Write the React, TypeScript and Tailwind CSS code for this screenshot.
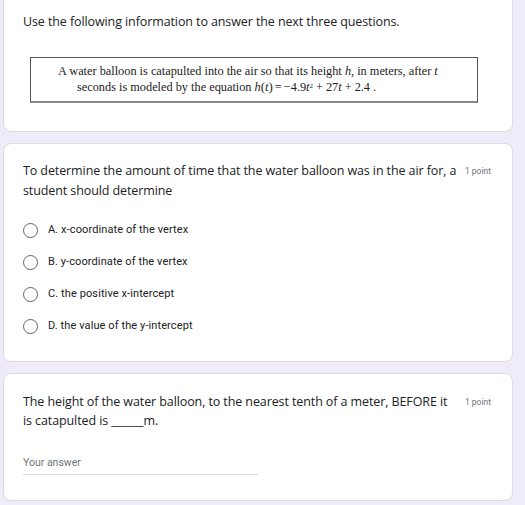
import React from 'react';

const options = [
  'A. x-coordinate of the vertex',
  'B. y-coordinate of the vertex',
  'C. the positive x-intercept',
  'D. the value of the y-intercept',
];

const Radio: React.FC = () => (
  <span className="block w-[15px] h-[15px] rounded-full border-[1.5px] border-[#5f6368] shrink-0" />
);

const Point: React.FC = () => (
  <span className="shrink-0 text-[8.5px] text-[#70757a] pt-[4px] ml-[6px]">1 point</span>
);

const App: React.FC = () => {
  return (
    <div className="w-[525px] h-[505px] bg-[#f0ebf8] overflow-hidden font-['Roboto',sans-serif] text-[#202124]">
      <div className="ml-[3px] w-[510px] flex flex-col gap-[11px]">
        {/* info card (top edge is scrolled off) */}
        <div className="bg-white rounded-b-lg border border-t-0 border-[#dadce0] h-[132px] pt-[13px] pl-[19px]">
          <p className="text-[12.5px] leading-[18px] font-['Open_Sans',sans-serif] tracking-[-0.1px]">
            Use the following information to answer the next three questions.
          </p>
          <div className="mt-[26px] ml-[7px] w-[448px] h-[46px] border border-[#555] border-b-2 border-b-[#888] font-['Liberation_Serif',serif] text-[12.3px] leading-[15px] text-[#222] pt-[6px]">
            <div className="pl-[27px] whitespace-nowrap">
              A water balloon is catapulted into the air so that its height <i>h</i>, in meters, after <i>t</i>
            </div>
            <div className="pl-[46px] whitespace-nowrap">
              seconds is modeled by the equation <i>h</i>
              <span className="text-[13px]">(</span><i>t</i><span className="text-[13px]">)</span>
              <span className="mx-[2px]">=</span>−4.9<i>t</i><sup className="text-[7px]">2</sup>
              <span className="mx-[3px]">+</span>27<i>t</i>
              <span className="mx-[3px]">+</span>2.4 .
            </div>
          </div>
        </div>

        {/* multiple choice card */}
        <div className="bg-white rounded-lg border border-[#dadce0] h-[219px] pt-[17px] pl-[19px] pr-[21px]">
          <div className="flex items-start">
            <p className="flex-1 text-[12.5px] leading-[20px] font-['Open_Sans',sans-serif] tracking-[-0.1px]">
              To determine the amount of time that the water balloon was in the air for, a student should determine
            </p>
            <Point />
          </div>
          <div className="mt-[22px] flex flex-col gap-[17px]">
            {options.map((o) => (
              <div key={o} className="flex items-center gap-[10px] h-[15px]">
                <Radio />
                <span className="text-[11px] tracking-[0.1px]">{o}</span>
              </div>
            ))}
          </div>
        </div>

        {/* short answer card */}
        <div className="bg-white rounded-lg border border-[#dadce0] h-[128px] pt-[18px] pl-[19px] pr-[21px]">
          <div className="flex items-start">
            <p className="flex-1 text-[12.5px] leading-[19px] font-['Open_Sans',sans-serif] tracking-[-0.1px]">
              The height of the water balloon, to the nearest tenth of a meter, BEFORE it is catapulted is ______m.
            </p>
            <Point />
          </div>
          <div className="mt-[25px] w-[235px] border-b border-[#dadce0] pb-[3px] text-[10.5px] text-[#70757a]">
            Your answer
          </div>
        </div>
      </div>
    </div>
  );
};

export default App;
